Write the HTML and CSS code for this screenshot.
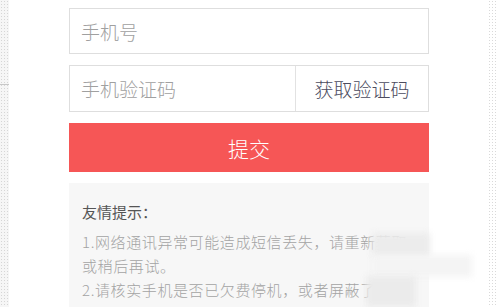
FILE: index.html
```html
<!DOCTYPE html>
<html lang="zh">
<head>
<meta charset="utf-8">
<link rel="stylesheet" href="styles.css">
</head>
<body>
<div class="page">
  <div class="deco-left"><span class="deco-line"></span></div>
  <div class="form">
    <div class="field"><span class="ph">手机号</span></div>
    <div class="field code-row">
      <span class="ph code-input">手机验证码</span>
      <span class="get-code">获取验证码</span>
    </div>
    <div class="submit">提交</div>
    <div class="tips">
      <div class="tips-title">友情提示：</div>
      <p class="tip">1.网络通讯异常可能造成短信丢失，请重新获取或稍后再试。</p>
      <p class="tip">2.请核实手机是否已欠费停机，或者屏蔽了系统短信。</p>
    </div>
  </div>
  <div class="deco-right"></div>
  <div class="blur b1"></div>
  <div class="blur b2"></div>
  <div class="blur b3"></div>
</div>
</body>
</html>
```
FILE: styles.css
```css
* { box-sizing: border-box; }
html, body { margin: 0; padding: 0; background: #fff; }
body { font-family: "Noto Sans CJK SC", "Microsoft YaHei", sans-serif; overflow: hidden; }
.page {
  position: relative;
  width: 499px;
  height: 307px;
  display: flex;
  overflow: hidden;
}
.deco-left {
  width: 9px;
  flex: none;
  background-image: radial-gradient(circle, #d6d6d6 0.6px, transparent 0.9px);
  background-size: 3px 3px;
  background-color: #f6f6f6;
  position: relative;
}
.deco-line {
  position: absolute;
  left: 0; top: 84px;
  width: 9px; height: 1px;
  background: #c8c8c8;
}
.form {
  width: 360px;
  flex: none;
  margin-left: 60px;
  padding-top: 8px;
  display: flex;
  flex-direction: column;
}
.form > * { flex: none; }
.field {
  height: 46px;
  border: 1px solid #dedede;
  background: #fff;
  display: flex;
  align-items: center;
  padding-left: 11px;
  margin-bottom: 11px;
}
.ph {
  font-size: 19px;
  font-weight: 300;
  color: #a0a0a0;
}
.code-row {
  height: 47px;
  padding-left: 0;
  align-items: stretch;
}
.code-input {
  width: 226px;
  flex: none;
  padding-left: 11px;
  display: flex;
  align-items: center;
  border-right: 1px solid #e2e2e2;
}
.get-code {
  flex: 1;
  display: flex;
  align-items: center;
  justify-content: center;
  font-size: 19px;
  font-weight: 300;
  color: #4b4b5e;
}
.submit {
  height: 49px;
  background: #f65656;
  color: #fff;
  font-size: 21px;
  font-weight: 300;
  display: flex;
  align-items: center;
  justify-content: center;
  margin-bottom: 11px;
}
.tips {
  background: #f7f7f7;
  padding: 17px 12px 0 13px;
  height: 140px;
}
.tips-title {
  font-size: 15px;
  line-height: 24px;
  color: #555;
  margin-bottom: 6px;
}
.tip {
  margin: 0;
  font-size: 15px;
  font-weight: 300;
  line-height: 24px;
  color: #a3a3a3;
  letter-spacing: 0.6px;
}
.deco-right {
  position: absolute;
  left: 488px; top: 0;
  width: 10px; height: 307px;
  background-image: radial-gradient(circle, #d9d9d9 0.6px, transparent 0.9px);
  background-size: 3px 3px;
}
.blur {
  position: absolute;
  background: #eeeeee;
  filter: blur(3px);
}
.b1 { left: 372px; top: 233px; width: 58px; height: 24px; background: #ececec; }
.b2 { left: 372px; top: 255px; width: 100px; height: 22px; background: #f4f4f4; }
.b3 { left: 366px; top: 276px; width: 50px; height: 31px; background: #ebebeb; }
```
